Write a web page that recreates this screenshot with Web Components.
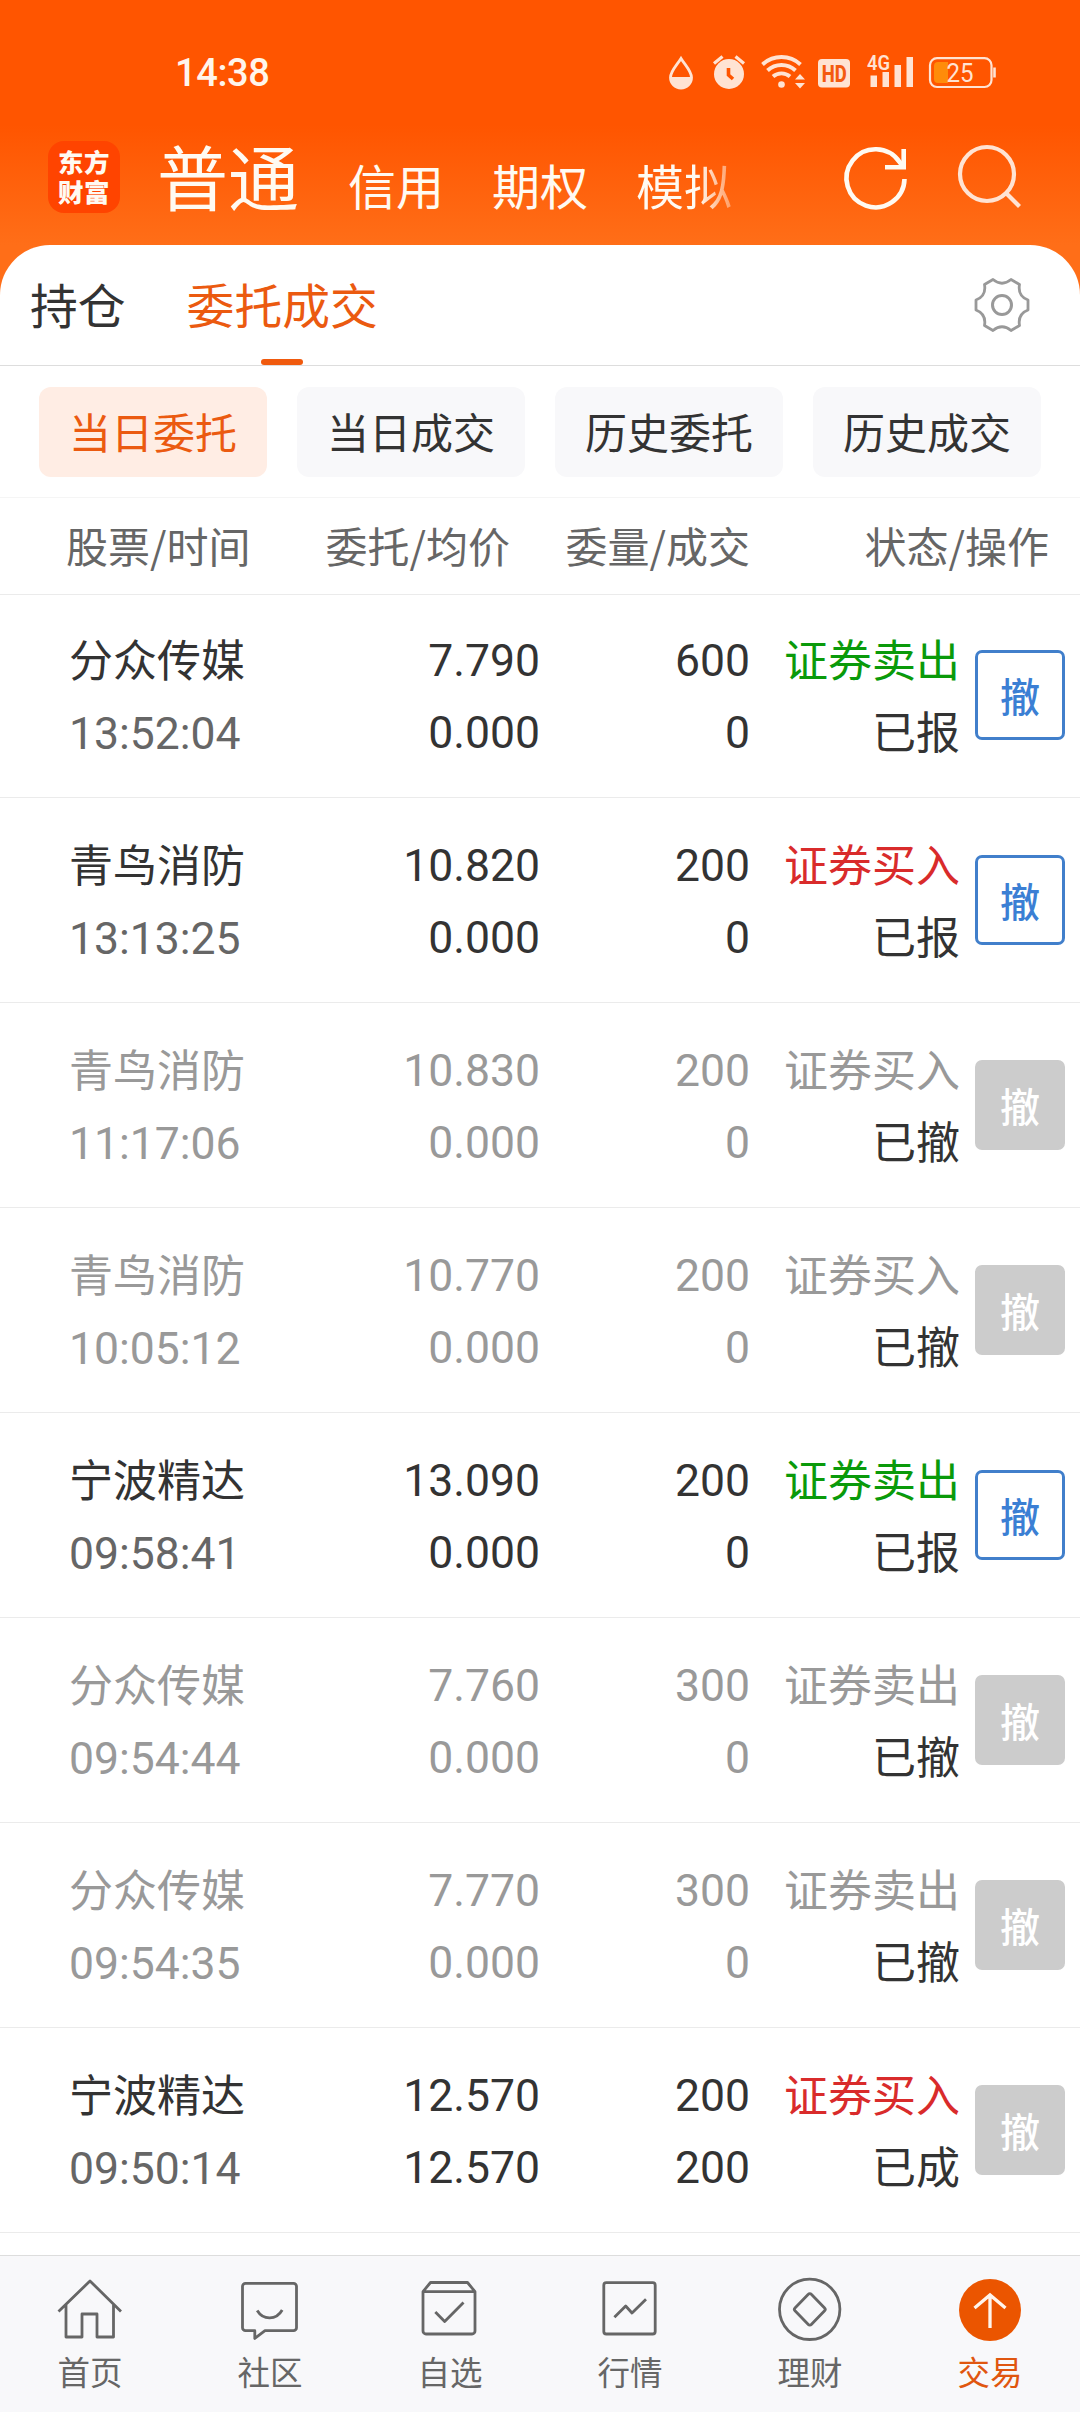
<!DOCTYPE html>
<html lang="zh-CN">
<head>
<meta charset="UTF-8">
<meta name="viewport" content="width=device-width, initial-scale=1.0">
<title>委托成交</title>
<style>
    html, body {
        margin: 0;
        padding: 0;
        background: #fff;
    }

    body {
        font-family: "Noto Sans CJK SC", "Noto Sans", sans-serif;
        color: #333;
    }
</style>
</head>
<body>
<trade-app></trade-app>

<script>
// Status bar
class StatusBar extends HTMLElement {
    connectedCallback() {
        this.attachShadow({ mode: 'open' });
        this.shadowRoot.innerHTML = `
            <style>
                :host {
                    display: flex;
                    justify-content: space-between;
                    align-items: center;
                    box-sizing: border-box;
                    height: 120px;
                    padding: 24px 82px 0 175px;
                    font-family: Roboto, sans-serif;
                    color: #fff5ec;
                }

                .time {
                    padding-top: 1px;
                    font-size: 38px;
                    font-weight: 500;
                    line-height: 44px;
                    letter-spacing: -0.4px;
                }

                svg {
                    display: block;
                }
            </style>
            <span class="time">14:38</span>
            <svg width="332" height="48" viewBox="666 48 332 48" fill="none" stroke="#ffe3d3">
                <path d="M681 58.500C677 65 670.500 71 670.500 77.500a10.500 10.500 0 0 0 21 0C691.500 71 685 65 681 58.500Z" stroke-width="2.800"/>
                <path d="M670.500 77h21a10.500 10.500 0 0 1-21 0Z" fill="#ffe3d3" stroke="none"/>
                <circle cx="729" cy="74" r="15" fill="#ffe3d3" stroke="none"/>
                <path d="M714 63.500l8.500-7M744 63.500l-8.500-7" stroke-width="3.200"/>
                <path d="M728.500 68v7l4.500 4" stroke="#ff5500" stroke-width="3.600"/>
                <path d="M762.500 64.500a28 28 0 0 1 38 0M767.500 70.500a20.500 20.500 0 0 1 28 0M773 76.500a13 13 0 0 1 17 0" stroke-width="3.900"/>
                <circle cx="781.500" cy="84.500" r="3.300" fill="#ffe3d3" stroke="none"/>
                <path d="M795 79.500l5-5.500 5 5.500ZM795 83l5 5.500 5-5.500Z" fill="#ffe3d3" stroke="none"/>
                <rect x="818" y="59" width="32" height="28.500" rx="4" fill="#ffe3d3" stroke="none"/>
                <text x="834.300" y="81.500" font-family="Roboto" font-size="23" font-weight="800" text-anchor="middle" textLength="25" lengthAdjust="spacingAndGlyphs" fill="#f45a10" stroke="none">HD</text>
                <text x="867" y="70" font-family="Roboto" font-size="20" font-weight="600" textLength="23" lengthAdjust="spacingAndGlyphs" fill="#ffe3d3" stroke="none">4G</text>
                <path d="M870.500 75.500h6.500V87h-6.500ZM882.500 72h6.500v15h-6.500ZM894.500 65h6.500v22h-6.500ZM906.500 57h6.500v30h-6.500Z" fill="#ffe3d3" stroke="none"/>
                <rect x="930" y="58.200" width="61.500" height="28.800" rx="7" stroke-width="2.200"/>
                <path d="M938 62h10v21h-10a4 4 0 0 1-4-4V66a4 4 0 0 1 4-4Z" fill="#ff8c0a" stroke="none"/>
                <path d="M994.500 67.500v10" stroke-width="2.600"/>
                <text x="960" y="81.500" font-family="Roboto" font-size="25" text-anchor="middle" textLength="27" lengthAdjust="spacingAndGlyphs" fill="#ffe3d3" stroke="none">25</text>
            </svg>
        `;
    }
}

// Top navigation with account types
class AppHeader extends HTMLElement {
    connectedCallback() {
        this.attachShadow({ mode: 'open' });
        this.shadowRoot.innerHTML = `
            <style>
                :host {
                    display: flex;
                    align-items: flex-start;
                    height: 125px;
                    padding: 0 54px 0 48px;
                    color: #fffaf2;
                }

                .logo {
                    flex: none;
                    display: flex;
                    flex-direction: column;
                    align-items: center;
                    box-sizing: border-box;
                    width: 72px;
                    height: 72px;
                    margin-top: 21px;
                    padding-top: 7px;
                    border-radius: 16px;
                    background: #ff4400;
                    font-family: Roboto, "Noto Sans CJK SC", sans-serif;
                    font-size: 25.500px;
                    font-weight: 900;
                    line-height: 30px;
                    letter-spacing: 0.5px;
                }

                nav {
                    display: flex;
                    align-items: baseline;
                    gap: 48px;
                    width: 586px;
                    margin: 2px 0 0 37px;
                    white-space: nowrap;
                    font-size: 48px;
                    line-height: 104px;
                }

                .current {
                    margin-right: 1px;
                    font-size: 71px;
                }

                /* last entry fades out at the edge of the strip */
                .fade {
                    background: linear-gradient(to right, #fffaf2 62px, rgba(255, 250, 242, 0.4) 94px);
                    -webkit-background-clip: text;
                    background-clip: text;
                    color: transparent;
                }

                svg {
                    flex: none;
                    margin-top: 20px;
                }

                .refresh {
                    margin-left: auto;
                }

                .search {
                    margin-left: 36px;
                }
            </style>
            <div class="logo"><span>东方</span><span>财富</span></div>
            <nav>
                <span class="current">普通</span>
                <span>信用</span>
                <span>期权</span>
                <span class="fade">模拟</span>
            </nav>
            <svg class="refresh" width="76" height="76" viewBox="838 140 76 76" fill="none" stroke="#fffaf2" stroke-width="4.600">
                <path d="M904.500 179a29 29 0 1 1-5-17l4 5"/>
                <path d="M885 167.200h18.700V149"/>
            </svg>
            <svg class="search" width="76" height="76" viewBox="950 140 76 76" fill="none" stroke="#ffe3d3" stroke-width="4.200">
                <circle cx="987" cy="174" r="27"/>
                <path d="M1006 193l13.500 13.500"/>
            </svg>
        `;
    }
}

// Position / order tabs
class MainTabs extends HTMLElement {
    connectedCallback() {
        this.attachShadow({ mode: 'open' });
        this.shadowRoot.innerHTML = `
            <style>
                :host {
                    display: flex;
                    box-sizing: border-box;
                    height: 121px;
                    padding: 0 48px 0 30px;
                    border-bottom: 1px solid #ddd;
                    font-size: 47.800px;
                    line-height: 118px;
                }

                .tab {
                    margin-right: 61px;
                }

                .tab.active {
                    position: relative;
                    color: #eb5a10;
                }

                .tab.active::after {
                    content: '';
                    position: absolute;
                    left: 50%;
                    bottom: 0;
                    width: 42px;
                    height: 6px;
                    margin-left: -21px;
                    border-radius: 3px;
                    background: #f05a0e;
                }

                svg {
                    margin: 30px 0 0 auto;
                }
            </style>
            <span class="tab">持仓</span>
            <span class="tab active">委托成交</span>
            <svg width="60" height="60" viewBox="-30 -30 60 60" fill="none" stroke="#999" stroke-width="2.800" stroke-linejoin="round">
                <path d="M-9 -25.500Q0 -18 9 -25.500L17.500 -20.500Q15.500 -9 26 -5V5Q15.500 9 17.500 20.500L9 25.500Q0 18 -9 25.500L-17.500 20.500Q-15.500 9 -26 5V-5Q-15.500 -9 -17.500 -20.500Z"/>
                <circle r="9.500" stroke-width="3"/>
            </svg>
        `;
    }
}

class FilterChip extends HTMLElement {
    connectedCallback() {
        this.attachShadow({ mode: 'open' });
        this.shadowRoot.innerHTML = `
            <style>
                :host {
                    display: block;
                    flex: 1;
                    height: 90px;
                    border-radius: 12px;
                    background: #f8f8fa;
                    font-size: 42px;
                    line-height: 88px;
                    text-align: center;
                }

                :host([active]) {
                    background: #ffede4;
                    color: #eb5a10;
                }
            </style>
            <slot></slot>
        `;
    }
}

class OrderRow extends HTMLElement {
    connectedCallback() {
        const get = (name) => this.getAttribute(name) || '';
        this.attachShadow({ mode: 'open' });
        this.shadowRoot.innerHTML = `
            <style>
                :host {
                    display: grid;
                    grid-template-columns: 231px 240px 210px 210px 90px;
                    align-items: end;
                    box-sizing: border-box;
                    height: 205px;
                    padding: 0 15px 27px 69px;
                    border-bottom: 1px solid #ebebeb;
                    font-family: Roboto, "Noto Sans CJK SC", sans-serif;
                    font-size: 44px;
                    line-height: 72px;
                    text-align: right;
                    white-space: nowrap;
                }

                :host(:first-of-type) {
                    height: 203px;
                }

                .stock {
                    text-align: left;
                }

                .num,
                .stock div + div {
                    font-size: 44.500px;
                }

                .num {
                    padding-bottom: 1px;
                }

                .stock div + div {
                    color: #666;
                }

                .sell { color: #0a9a0a; }
                .buy { color: #d92b2b; }

                :host([cancelled]) .stock div,
                :host([cancelled]) .num,
                :host([cancelled]) .side {
                    color: #999;
                }

                button {
                    box-sizing: border-box;
                    width: 90px;
                    height: 90px;
                    margin: 0 0 30px 15px;
                    padding: 0;
                    border: 3px solid #417fcb;
                    border-radius: 7px;
                    background: #fff;
                    color: #3b7fd4;
                    font: 500 40px/82px "Noto Sans CJK SC", sans-serif;
                }

                button:disabled {
                    border-color: #ccc;
                    background: #ccc;
                    color: #fff;
                }
            </style>
            <div class="stock"><div>${get('name')}</div><div>${get('time')}</div></div>
            <div class="num"><div>${get('price')}</div><div>${get('avg')}</div></div>
            <div class="num"><div>${get('amount')}</div><div>${get('filled')}</div></div>
            <div><div class="side ${get('side')}">${get('side') === 'sell' ? '证券卖出' : '证券买入'}</div><div>${get('status')}</div></div>
            <button ${get('status') === '已报' ? '' : 'disabled'}>撤</button>
        `;
    }
}

class OrderList extends HTMLElement {
    connectedCallback() {
        this.attachShadow({ mode: 'open' });
        this.shadowRoot.innerHTML = `
            <style>
                :host {
                    display: block;
                }

                .filters {
                    display: flex;
                    gap: 30px;
                    padding: 21px 39px 20px;
                    border-bottom: 1px solid #f5f5f5;
                }

                .head {
                    display: grid;
                    grid-template-columns: 184px 260px 240px 299px;
                    box-sizing: border-box;
                    height: 97px;
                    padding-left: 66px;
                    border-bottom: 1px solid #ebebeb;
                    color: #666;
                    font-size: 42px;
                    line-height: 94px;
                    text-align: right;
                    white-space: nowrap;
                }
            </style>
            <div class="filters">
                <filter-chip active>当日委托</filter-chip>
                <filter-chip>当日成交</filter-chip>
                <filter-chip>历史委托</filter-chip>
                <filter-chip>历史成交</filter-chip>
            </div>
            <div class="head">
                <span>股票/时间</span><span>委托/均价</span><span>委量/成交</span><span>状态/操作</span>
            </div>
            <div>
                <order-row name="分众传媒" time="13:52:04" price="7.790" avg="0.000" amount="600" filled="0" side="sell" status="已报"></order-row>
                <order-row name="青鸟消防" time="13:13:25" price="10.820" avg="0.000" amount="200" filled="0" side="buy" status="已报"></order-row>
                <order-row name="青鸟消防" time="11:17:06" price="10.830" avg="0.000" amount="200" filled="0" side="buy" status="已撤" cancelled></order-row>
                <order-row name="青鸟消防" time="10:05:12" price="10.770" avg="0.000" amount="200" filled="0" side="buy" status="已撤" cancelled></order-row>
                <order-row name="宁波精达" time="09:58:41" price="13.090" avg="0.000" amount="200" filled="0" side="sell" status="已报"></order-row>
                <order-row name="分众传媒" time="09:54:44" price="7.760" avg="0.000" amount="300" filled="0" side="sell" status="已撤" cancelled></order-row>
                <order-row name="分众传媒" time="09:54:35" price="7.770" avg="0.000" amount="300" filled="0" side="sell" status="已撤" cancelled></order-row>
                <order-row name="宁波精达" time="09:50:14" price="12.570" avg="12.570" amount="200" filled="200" side="buy" status="已成"></order-row>
            </div>
        `;
    }
}

// Bottom tab item, icon goes in the "icon" slot
class TabItem extends HTMLElement {
    connectedCallback() {
        this.attachShadow({ mode: 'open' });
        this.shadowRoot.innerHTML = `
            <style>
                :host {
                    display: flex;
                    flex-direction: column;
                    align-items: center;
                    flex: 1;
                    padding-top: 18px;
                    color: #666;
                    font-size: 32.500px;
                    line-height: 48px;
                }

                :host([active]) {
                    color: #e0560f;
                }

                ::slotted(svg) {
                    width: 72px;
                    height: 72px;
                    margin-bottom: 1px;
                    fill: none;
                    stroke: #666;
                    stroke-width: 2.800;
                    stroke-linejoin: round;
                }
            </style>
            <slot name="icon"></slot>
            <slot></slot>
        `;
    }
}

class BottomBar extends HTMLElement {
    connectedCallback() {
        this.attachShadow({ mode: 'open' });
        this.shadowRoot.innerHTML = `
            <style>
                :host {
                    display: flex;
                    box-sizing: border-box;
                    height: 157px;
                    border-top: 1px solid #ddd;
                    background: #f8f8fa;
                }
            </style>
            <tab-item>
                <svg slot="icon" viewBox="0 0 72 72"><path d="M4.500 37.500L36 7l31 30.500M12 31v32h16V40h15v23h16.500V31"/></svg>
                首页
            </tab-item>
            <tab-item>
                <svg slot="icon" viewBox="0 0 72 72"><path d="M11.500 9.300h48a3 3 0 0 1 3 3v41.400a3 3 0 0 1-3 3H31L20.800 64.500V56.700H11.500a3 3 0 0 1-3-3V12.300a3 3 0 0 1 3-3Z"/><path d="M23.200 36.500c6 10 19 10 25-.5"/></svg>
                社区
            </tab-item>
            <tab-item>
                <svg slot="icon" viewBox="0 0 72 72"><path d="M9 17.700L16.500 8.500h37L61 17.700V57a3 3 0 0 1-3 3H12a3 3 0 0 1-3-3ZM9 17.700h52M21.300 38l9.400 9.500 18.800-19"/></svg>
                自选
            </tab-item>
            <tab-item>
                <svg slot="icon" viewBox="0 0 72 72"><rect x="9.800" y="8.700" width="51.400" height="51.300" rx="2.500"/><path d="M20.400 43.300L31.700 32l6.300 7 14-13.700"/></svg>
                行情
            </tab-item>
            <tab-item>
                <svg slot="icon" viewBox="0 0 72 72"><circle cx="35.700" cy="35.300" r="30.200"/><path d="M37.300 20.300L50.600 34a2 2 0 0 1 0 2.800L37.300 50.500a2 2 0 0 1-3 0L21 36.800a2 2 0 0 1 0-2.800L34.300 20.300a2 2 0 0 1 3 0Z"/></svg>
                理财
            </tab-item>
            <tab-item active>
                <svg slot="icon" viewBox="0 0 72 72"><circle cx="36" cy="36" r="31" style="fill: #eb5500; stroke: none"/><path d="M36 54V21M20.500 34L36 21l15.500 13" style="stroke: #fff5ec; stroke-width: 3.300; stroke-linejoin: miter"/></svg>
                交易
            </tab-item>
        `;
    }
}

class TradeApp extends HTMLElement {
    connectedCallback() {
        this.attachShadow({ mode: 'open' });
        this.shadowRoot.innerHTML = `
            <style>
                :host {
                    display: flex;
                    flex-direction: column;
                    width: 1080px;
                    height: 2412px;
                    overflow: hidden;
                    background: linear-gradient(#ff5500 0, #ff5500 125px, #ff6e18 245px);
                }

                main {
                    flex: 1;
                    border-radius: 50px 50px 0 0;
                    background: #fff;
                }
            </style>
            <status-bar></status-bar>
            <app-header></app-header>
            <main>
                <main-tabs></main-tabs>
                <order-list></order-list>
            </main>
            <bottom-bar></bottom-bar>
        `;
    }
}

customElements.define('status-bar', StatusBar);
customElements.define('app-header', AppHeader);
customElements.define('main-tabs', MainTabs);
customElements.define('filter-chip', FilterChip);
customElements.define('order-row', OrderRow);
customElements.define('order-list', OrderList);
customElements.define('tab-item', TabItem);
customElements.define('bottom-bar', BottomBar);
customElements.define('trade-app', TradeApp);
</script>
</body>
</html>
